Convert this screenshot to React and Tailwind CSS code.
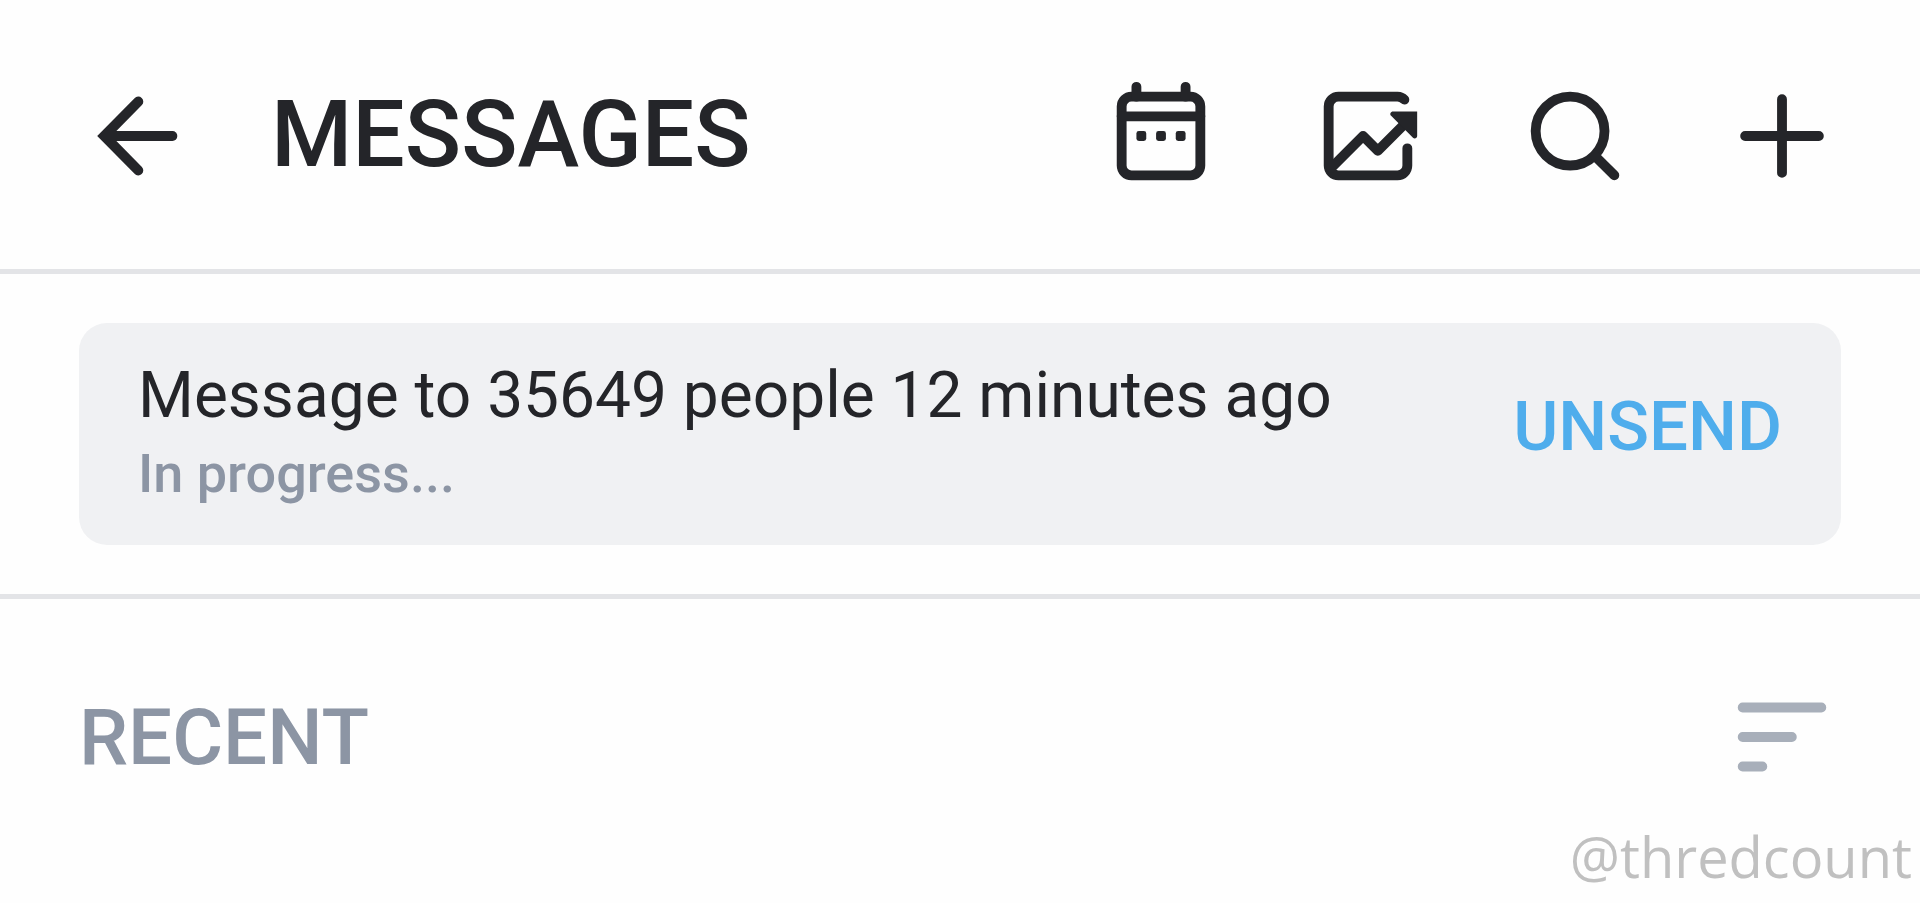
function Icon({ children, className = "" }) {
  return (
    <svg
      viewBox="0 0 24 24"
      fill="none"
      stroke="currentColor"
      strokeWidth="2"
      strokeLinecap="round"
      strokeLinejoin="round"
      aria-hidden="true"
      className={`block size-[118px] shrink-0 ${className}`}
    >
      {children}
    </svg>
  )
}

function BackIcon() {
  return (
    <Icon>
      <path d="M5.5 12H19" />
      <path fill="currentColor" stroke="none" d="M3.7 12L11.3 4.3A1 1 0 0 1 12.8 5.7L6.6 12L12.8 18.3A1 1 0 0 1 11.3 19.7Z" />
    </Icon>
  )
}

function CalendarIcon() {
  return (
    <Icon>
      <rect x="4" y="4" width="16" height="16" rx="2" />
      <path d="M7 4V2M17 4V2M4 8H20" />
      <g fill="currentColor" stroke="none">
        <rect x="7" y="11" width="2" height="2" rx="0.5" />
        <rect x="11" y="11" width="2" height="2" rx="0.5" />
        <rect x="15" y="11" width="2" height="2" rx="0.5" />
      </g>
    </Icon>
  )
}

function StatsIcon() {
  return (
    <Icon>
      <path d="M19.4 4.6A2 2 0 0 0 18 4H6A2 2 0 0 0 4 6V18A2 2 0 0 0 6 20H18A2 2 0 0 0 20 18V14.5" />
      <path d="M4.5 18.5L11 12L14 15L20 9" />
      <path
        fill="currentColor"
        stroke="none"
        d="M17.1 7H22V12C22 12.45 21.46 12.67 21.15 12.35L16.7 7.9C16.35 7.55 16.6 7 17.1 7Z"
      />
    </Icon>
  )
}

function SearchIcon() {
  return (
    <Icon>
      <circle cx="11" cy="11" r="7" />
      <path d="M16 16L20 20" />
    </Icon>
  )
}

function PlusIcon() {
  return (
    <Icon>
      <path d="M12 4.5V19.5M4.5 12H19.5" />
    </Icon>
  )
}

function SortIcon() {
  return (
    <Icon>
      <path d="M4 6H20M4 12H14M4 18H8" />
    </Icon>
  )
}

const actions = [
  { label: "Scheduled messages", icon: CalendarIcon },
  { label: "Statistics", icon: StatsIcon },
  { label: "Search", icon: SearchIcon },
  { label: "New message", icon: PlusIcon },
]

export default function App() {
  return (
    <div className="min-h-screen bg-[#fefefe] font-['Roboto',sans-serif] text-[#242529]">
      <header className="flex items-center border-b-5 border-[#e3e4e7] px-[79px] pt-[77px] pb-[74px]">
        <button type="button" aria-label="Back">
          <BackIcon />
        </button>
        <h1 className="ml-[74px] pb-[2px] text-[93px] leading-[110px] font-medium">MESSAGES</h1>
        <div className="ml-auto flex gap-[89px]">
          {actions.map(({ label, icon: ActionIcon }) => (
            <button key={label} type="button" aria-label={label}>
              <ActionIcon />
            </button>
          ))}
        </div>
      </header>

      <main>
        <section className="border-b-5 border-[#e3e4e7] px-[79px] py-[49px]">
          <div className="flex items-center justify-between rounded-[28px] bg-[#f0f1f3] px-[59px] pt-8 pb-[34px]">
            <div>
              <p className="text-[64px] leading-[82px]">Message to 35649 people 12 minutes ago</p>
              <p className="text-[54px] leading-[74px] font-medium text-[#8c95a4]">In progress...</p>
            </div>
            <button type="button" className="pb-3 text-[69px] leading-[80px] font-medium text-[#4fadec]">
              UNSEND
            </button>
          </div>
        </section>

        <section className="flex items-center justify-between px-[79px] pt-[79px]">
          <h2 className="pt-[2px] text-[78px] leading-[92px] font-medium text-[#8c95a4]">RECENT</h2>
          <button type="button" aria-label="Sort" className="text-[#a8afba]">
            <SortIcon />
          </button>
        </section>
      </main>

      <footer className="mt-[22px] pr-2 text-right font-['Open_Sans',sans-serif] text-[56px] leading-[76px] text-[#c0c0c0]">
        @thredcount
      </footer>
    </div>
  )
}
